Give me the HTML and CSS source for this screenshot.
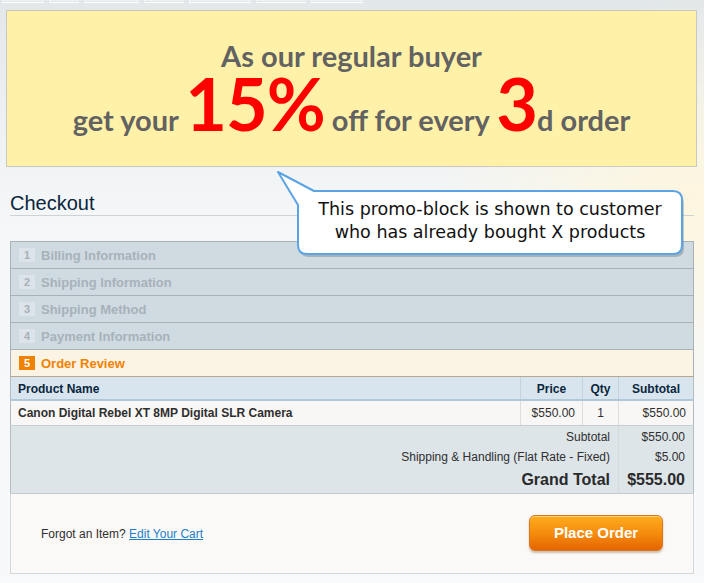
FILE: index.html
```html
<!DOCTYPE html>
<html>
<head>
<meta charset="utf-8">
<link rel="stylesheet" href="styles.css">
</head>
<body>
<div class="page">
  <div class="topstrip" aria-hidden="true"><span class="tl1"></span><span class="tl2"></span><span class="tl3"></span><span class="tl4"></span><span class="tl5"></span><span class="tl6"></span><span class="tl7"></span></div>
  <div class="promo">
    <div class="promo-l1">As our regular buyer</div>
    <div class="promo-l2">get your <span class="big">15%</span> off for every <span class="big">3</span>d order</div>
  </div>
  <div class="checkout">
    <h1 class="title">Checkout</h1>
    <ol class="steps">
      <li class="step"><span class="num">1</span><span class="label">Billing Information</span></li>
      <li class="step"><span class="num">2</span><span class="label">Shipping Information</span></li>
      <li class="step"><span class="num">3</span><span class="label">Shipping Method</span></li>
      <li class="step"><span class="num">4</span><span class="label">Payment Information</span></li>
      <li class="step active"><span class="num">5</span><span class="label">Order Review</span></li>
    </ol>
    <table class="review">
      <thead>
        <tr><th class="c-name">Product Name</th><th class="c-price">Price</th><th class="c-qty">Qty</th><th class="c-sub">Subtotal</th></tr>
      </thead>
      <tbody>
        <tr><td class="c-name pname">Canon Digital Rebel XT 8MP Digital SLR Camera</td><td class="c-price">$550.00</td><td class="c-qty">1</td><td class="c-sub">$550.00</td></tr>
      </tbody>
      <tfoot>
        <tr class="first"><td colspan="3" class="tl">Subtotal</td><td class="tv">$550.00</td></tr>
        <tr><td colspan="3" class="tl">Shipping &amp; Handling (Flat Rate - Fixed)</td><td class="tv">$5.00</td></tr>
        <tr class="grand"><td colspan="3" class="tl">Grand Total</td><td class="tv">$555.00</td></tr>
      </tfoot>
    </table>
    <div class="buttons">
      <p class="forgot">Forgot an Item? <a class="edit">Edit Your Cart</a></p>
      <button class="place">Place Order</button>
    </div>
  </div>
  <div class="bubble">
    <svg class="bubble-shape" width="430" height="100" viewBox="0 0 430 100">
      <path d="M 8,7 L 44,26 H 403 Q 412,26 412,35 V 80 Q 412,89 403,89 H 37 Q 28,89 28,80 V 40 Z" fill="#000" opacity="0.18" transform="translate(2,3)"/>
      <path d="M 8,7 L 44,26 H 403 Q 412,26 412,35 V 80 Q 412,89 403,89 H 37 Q 28,89 28,80 V 40 Z" fill="#fff" stroke="#5aa4e6" stroke-width="2" stroke-linejoin="round"/>
    </svg>
    <div class="bubble-text">This promo-block is shown to customer<br>who has already bought X products</div>
  </div>
</div>
</body>
</html>
```
FILE: styles.css
```css
html, body {
  margin: 0;
  padding: 0;
}
body {
  width: 704px;
  height: 583px;
  overflow: hidden;
  font-family: "Liberation Sans", Arial, sans-serif;
  background:
    radial-gradient(ellipse 260px 200px at 690px 200px, rgba(255, 246, 220, 0.9), rgba(255, 246, 220, 0) 100%),
    linear-gradient(to bottom, #e2e7e9 0, #eef1f3 120px, #f5f7f8 230px, #f8f9fa 583px);
}
.page {
  position: relative;
  height: 583px;
}
.topstrip {
  height: 10px;
  display: flex;
  align-items: flex-start;
  gap: 5px;
  padding-left: 2px;
}
.topstrip span {
  display: block;
  height: 1px;
  border-bottom: 1px solid #fff;
  border-top: 1px dotted rgba(255, 255, 255, 0.8);
}
.tl1 { width: 42px; }
.tl2 { width: 30px; }
.tl3 { width: 55px; }
.tl4 { width: 40px; }
.tl5 { width: 62px; }
.tl6 { width: 50px; }
.tl7 { width: 52px; }
.promo {
  margin-left: 6px;
  width: 689px;
  height: 155px;
  border: 1px solid #c9c9c4;
  background: #fff2a8;
  display: flex;
  flex-direction: column;
  align-items: center;
  font-family: Lato, "Open Sans", sans-serif;
  font-weight: 700;
  color: #626262;
  box-sizing: content-box;
}
.promo-l1 {
  margin-top: 28px;
  font-size: 29px;
  line-height: 34px;
}
.promo-l2 {
  font-size: 29px;
  line-height: 70px;
  margin-top: -5px;
}
.big {
  color: #ff0000;
  font-size: 72px;
  letter-spacing: -1px;
}
.checkout {
  width: 684px;
  margin-left: 10px;
}
.title {
  margin: 0;
  padding-top: 24px;
  height: 24px;
  font-size: 20px;
  line-height: 24px;
  font-weight: 400;
  color: #0a263c;
  border-bottom: 1px solid #cdd2d5;
}
.steps {
  list-style: none;
  margin: 25px 0 0 0;
  padding: 0;
  border-left: 1px solid #a8b1b7;
  border-right: 1px solid #a8b1b7;
}
.step {
  height: 26px;
  border-top: 1px solid #a8b1b7;
  background: #d0dae1;
  display: flex;
  align-items: center;
  padding-left: 8px;
}
.num {
  width: 16px;
  height: 14px;
  background: #dce4e9;
  color: #a7b1b9;
  font-size: 11px;
  font-weight: 700;
  line-height: 14px;
  text-align: center;
  margin-right: 6px;
}
.label {
  font-size: 13px;
  font-weight: 700;
  color: #a7b2ba;
}
.step.active {
  background: #fbf3e3;
}
.step.active .num {
  background: #f18200;
  color: #fff;
}
.step.active .label {
  color: #f18200;
}
.review {
  width: 684px;
  border-collapse: collapse;
  border-left: 1px solid #b3bcc2;
  border-right: 1px solid #b3bcc2;
  font-size: 12px;
}
.review th {
  height: 21px;
  padding: 1px 7px 0 7px;
  background: #d9e5ee;
  color: #0a263c;
  font-weight: 700;
  border-top: 1px solid #b7a990;
  border-bottom: 2px solid #b0c7d8;
  border-left: 1px solid #c2d3df;
}
.review th.c-name {
  text-align: left;
  border-left: none;
}
.review th.c-price, .review th.c-qty, .review th.c-sub {
  text-align: center;
}
.review tbody td {
  height: 24px;
  background: #f8f7f5;
  color: #2f2f2f;
  border-bottom: 1px solid #c6ced3;
  border-left: 1px solid #dcdfe0;
  padding: 0 7px;
}
.review tbody td.c-name {
  border-left: none;
}
.pname {
  font-weight: 700;
  color: #1e1e1e;
}
.c-name { width: auto; }
.review .c-price { width: 47px; text-align: right; }
.review .c-qty { width: 21px; text-align: center; }
.review .c-sub { width: 60px; text-align: right; }
.review tfoot td {
  background: #dee5e9;
  color: #2f2f2f;
  padding: 0 8px;
  text-align: right;
  height: 20px;
}
.review tfoot tr.first td {
  padding-top: 1px;
}
.review tfoot .tv {
  border-left: 1px solid #d3dbe0;
}
.review tfoot tr.grand td {
  font-size: 16px;
  font-weight: 700;
  height: 25px;
  padding-bottom: 1px;
  border-bottom: 1px solid #c5cbcf;
  color: #2a2a2a;
}
.buttons {
  height: 79px;
  border: 1px solid #d6d6d6;
  border-top: none;
  background: #faf9f7;
  display: flex;
  align-items: center;
  justify-content: space-between;
  padding: 0 30px 0 30px;
}
.forgot {
  margin: 0;
  font-size: 12px;
  color: #2f2f2f;
  margin-top: 0;
}
.edit {
  color: #1e7ec8;
  text-decoration: underline;
}
.place {
  width: 134px;
  height: 36px;
  border: 1px solid #d9751b;
  border-radius: 6px;
  background: linear-gradient(to bottom, #fdab1d 0%, #f68d0e 50%, #e46500 100%);
  color: #fff;
  font-family: "Liberation Sans", Arial, sans-serif;
  font-size: 15px;
  font-weight: 700;
  box-shadow: 0 2px 2px rgba(120, 80, 40, 0.35), inset 0 1px 0 rgba(255, 220, 140, 0.8);
  padding: 0;
  margin-top: -2px;
}
.bubble {
  position: absolute;
  left: 270px;
  top: 165px;
  width: 430px;
  height: 100px;
}
.bubble-shape {
  position: absolute;
  left: 0;
  top: 0;
}
.bubble-text {
  position: absolute;
  left: 28px;
  top: 33px;
  width: 384px;
  text-align: center;
  font-family: "DejaVu Sans", Verdana, sans-serif;
  font-size: 17.5px;
  line-height: 23px;
  color: #111;
}
```
